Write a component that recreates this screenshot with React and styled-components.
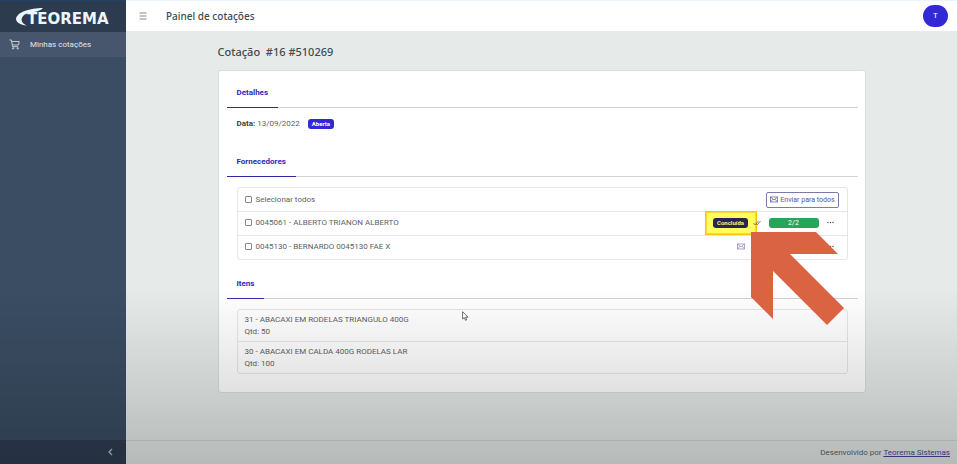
import styled, { createGlobalStyle } from "styled-components";
import { useState } from "react";

const GlobalStyle = createGlobalStyle`
    * {
        box-sizing: border-box;
    }
    body {
        margin: 0;
        font-family: Roboto, "Noto Sans", sans-serif;
        font-size: 8px;
        line-height: 12px;
        color: #5d6267;
        background: #e6ebea;
    }
    button, input {
        font: inherit;
    }
`

const Layout = styled.div`
    display: flex;
    min-height: 100vh;
    position: relative;
`

const Shade = styled.div`
    position: absolute;
    inset: 0;
    pointer-events: none;
    background: linear-gradient(180deg, rgba(0, 0, 0, 0) 62%, rgba(0, 0, 0, 0.12) 85%, rgba(0, 0, 0, 0.21) 100%);
`

const Sidebar = styled.aside`
    display: flex;
    flex-direction: column;
    flex: 0 0 126px;
    background: #3a4d63;
`

const Brand = styled.a`
    display: flex;
    align-items: center;
    justify-content: center;
    height: 32px;
    background: #2d3b4f;
    border-top: 1px solid #224168;
    >svg{
        display: block;
    }
`

const NavLink = styled.a`
    display: flex;
    align-items: center;
    gap: 10px;
    height: 25px;
    padding: 0 9px;
    background: #47566c;
    color: #e3e8ee;
    text-decoration: none;
`

const CollapseButton = styled.button`
    display: flex;
    align-items: center;
    justify-content: flex-end;
    height: 24px;
    margin-top: auto;
    padding: 0 12px;
    border: 0;
    background: #2e3d51;
    color: #b4bfca;
    cursor: pointer;
`

const Page = styled.div`
    display: flex;
    flex-direction: column;
    flex: 1;
    min-width: 0;
`

const Header = styled.header`
    display: flex;
    align-items: center;
    height: 31px;
    padding: 0 9px 0 13px;
    background: #ffffff;
    border-top: 1px solid #e8f6ff;
`

const MenuButton = styled.button`
    display: flex;
    padding: 0;
    border: 0;
    background: none;
    color: #666b70;
    cursor: pointer;
`

const HeaderTitle = styled.h1`
    margin: 0 auto 0 19px;
    font-family: "Noto Sans", sans-serif;
    font-size: 10px;
    font-weight: 500;
    color: #444a50;
`

const Avatar = styled.button`
    width: 25px;
    height: 22px;
    padding: 0;
    border: 0;
    border-radius: 11px;
    background: #3328d6;
    color: #ffffff;
`

const Content = styled.main`
    flex: 1;
    width: 100%;
    max-width: 648px;
    margin: 0 auto;
`

const QuoteTitle = styled.h2`
    margin: 13px 0 10px;
    font-family: "Noto Sans", sans-serif;
    font-size: 11px;
    line-height: 16px;
    font-weight: 500;
    color: #444a4f;
    white-space: pre-wrap;
`

const Card = styled.div`
    padding: 8px 7px 18px 8px;
    background: #ffffff;
    border: 1px solid #d9dddd;
    border-radius: 3px;
`

const Section = styled.section`
    margin-bottom: ${props => props.$gap || "0px"};
`

const TabBar = styled.div`
    display: flex;
    border-bottom: 1px solid #cfd3d5;
    margin-bottom: 10px;
`

const Tab = styled.h3`
    margin: 0 0 -1px;
    padding: 8px 10px;
    border-bottom: 1px solid #3427a8;
    font-size: 8px;
    font-weight: 700;
    color: #3128b4;
`

const DetailLine = styled.p`
    display: flex;
    align-items: center;
    gap: 8px;
    margin: 0;
    padding: 0 10px;
    >span>b{
        color: #3b4148;
    }
`

const Badge = styled.span`
    padding: 0 4px;
    border-radius: 3px;
    background: ${props => props.$color};
    color: ${props => props.$text || "#ffffff"};
    font-size: 6px;
    line-height: 10px;
    font-weight: 700;
`

const List = styled.ul`
    list-style: none;
    margin: 0 10px;
    padding: 0;
    border: 1px solid #e4e6e8;
    border-radius: 3px;
`

const SupplierRow = styled.li`
    display: flex;
    align-items: center;
    justify-content: space-between;
    height: 24px;
    padding: 0 8px 2px 7px;
    &:first-child{
        height: 23px;
        padding-bottom: 0;
    }
    & + &{
        border-top: 1px solid #e4e6e8;
    }
`

const ItemRow = styled.li`
    padding: 4px 7px 3px;
    & + &{
        border-top: 1px solid #e4e6e8;
    }
    >p{
        margin: 0;
    }
`

const CheckLabel = styled.label`
    display: flex;
    align-items: center;
    gap: 4px;
`

const Checkbox = styled.input`
    appearance: none;
    width: 7px;
    height: 7px;
    margin: 0;
    border: 1px solid #85898e;
    border-radius: 1px;
    background: #ffffff;
    &:checked{
        background: #3328d6;
    }
`

const SendAllButton = styled.button`
    display: flex;
    align-items: center;
    gap: 2px;
    height: 16px;
    padding: 0 3px;
    border: 1px solid #7c7aa6;
    border-radius: 2px;
    background: #ffffff;
    color: #5753a5;
    font-size: 7px;
    cursor: pointer;
`

const RowActions = styled.div`
    display: flex;
    align-items: center;
    gap: 8px;
`

const Highlight = styled.span`
    position: relative;
    display: flex;
    align-items: center;
    justify-content: center;
    width: 52px;
    height: 24px;
    margin-right: -12px;
    border: 1px solid #fcc40d;
    box-shadow: inset 0 0 0 1px #fdd835;
    background: #ffff5c;
`

const Arrow = styled.svg`
    position: absolute;
    left: 45px;
    top: 20px;
    z-index: 2;
    pointer-events: none;
`

const Progress = styled.div`
    width: 50px;
    border-radius: 3px;
    background: #27a65a;
    color: #ffffff;
    font-size: 7px;
    line-height: 10px;
    text-align: center;
`

const IconButton = styled.button`
    display: flex;
    width: ${props => props.$width || "8px"};
    padding: 0;
    border: 0;
    background: none;
    color: ${props => props.$color || "#3b4148"};
    cursor: pointer;
`

const Pointer = styled.svg`
    position: absolute;
    left: 462px;
    top: 311px;
    pointer-events: none;
`

const Footer = styled.footer`
    height: 24px;
    padding: 6px 7px;
    border-top: 1px solid #d5dada;
    text-align: right;
    >a{
        color: #4a449c;
    }
`

const Logo = () => (
    <svg width="94" height="20" viewBox="0 0 94 20" role="img" aria-label="Teorema">
        <path d="M27 1C14 1 1 5 0 12C0 15 4 18 11 18.5C6 16.5 4 13 7 9C9 6.5 13 5.5 18 5C22 4.500 25 3 27 1Z" fill="#eef6fb" />
        <text x="11" y="17" fontFamily="DejaVu Sans" fontWeight="700" fontSize="15" fill="#eef6fb">TEOREMA</text>
    </svg>
)

const CartIcon = () => (
    <svg width="11" height="11" viewBox="0 0 11 11" fill="none" stroke="currentColor" strokeWidth="0.8" strokeLinejoin="round">
        <path d="M0.5 1H2.3L3.6 7.7H9.3M2.6 2.5H10.2L9.5 6H3.3" />
        <circle cx="4.1" cy="9.4" r="0.7" />
        <circle cx="8.7" cy="9.4" r="0.7" />
    </svg>
)

const MailIcon = () => (
    <svg width="8" height="7" viewBox="0 0 8 7" fill="none" stroke="currentColor" strokeWidth="0.7">
        <rect x="0.5" y="1" width="7" height="5" />
        <path d="M0.5 1L4 4L7.5 1M0.5 6L3 3.2M7.5 6L5 3.2" />
    </svg>
)

const DotsIcon = () => (
    <svg width="7" height="3" viewBox="0 0 7 3" fill="currentColor">
        <circle cx="1" cy="1.5" r="0.7" />
        <circle cx="3.5" cy="1.5" r="0.7" />
        <circle cx="6" cy="1.5" r="0.7" />
    </svg>
)

const CheckMark = styled.svg`
    position: relative;
    z-index: 1;
`

const CheckAllIcon = () => (
    <CheckMark width="8" height="6" viewBox="0 0 8 6" fill="none" stroke="#5c6166" strokeWidth="0.8">
        <path d="M0.5 3L2.3 5L5.5 0.8M3.6 4.3L4.3 5L7.6 0.8" />
    </CheckMark>
)

const suppliers = [
    { code: "0045061", name: "ALBERTO TRIANON ALBERTO", status: "Concluída", progress: "2/2" },
    { code: "0045130", name: "BERNARDO 0045130 FAE X" },
]

const items = [
    { code: 31, name: "ABACAXI EM RODELAS TRIANGULO 400G", amount: 50 },
    { code: 30, name: "ABACAXI EM CALDA 400G RODELAS LAR", amount: 100 },
]

const MailSlot = styled.div`
    display: flex;
    align-items: center;
    width: 102px;
    justify-content: space-between;
`

const Supplier = ({ supplier, checked, onToggle }) => (
    <SupplierRow>
        <CheckLabel>
            <Checkbox type="checkbox" checked={checked} onChange={onToggle} />
            {supplier.code} - {supplier.name}
        </CheckLabel>
        {supplier.status ?
        <RowActions>
            <Highlight>
                <Badge $color="#2b2352" $text="#f6f27a">{supplier.status}</Badge>
                <Arrow width="93" height="93" viewBox="0 0 93 93">
                    <path d="M0 0H65L87 22H39L93 76L76 93L22 39V87L0 65Z" fill="#da6343" />
                </Arrow>
            </Highlight>
            <CheckAllIcon />
            <Progress>{supplier.progress}</Progress>
            <IconButton $width="12px" aria-label="Opções"><DotsIcon /></IconButton>
        </RowActions> :
        <MailSlot>
            <IconButton $color="#8581b4" aria-label="Enviar"><MailIcon /></IconButton>
            <IconButton $width="12px" aria-label="Opções"><DotsIcon /></IconButton>
        </MailSlot>
        }
    </SupplierRow>
)

const App = () => {

    const [selected, setSelected] = useState([]);

    const toggle = (code) => {
        setSelected(selected.includes(code) ? selected.filter(c => c !== code) : [...selected, code]);
    }

    const allSelected = selected.length === suppliers.length;

    return(
        <Layout>
            <GlobalStyle />
            <Sidebar>
                <Brand href="#"><Logo /></Brand>
                <NavLink href="#"><CartIcon />Minhas cotações</NavLink>
                <CollapseButton aria-label="Recolher menu">
                    <svg width="7" height="8" viewBox="0 0 7 8" fill="none" stroke="currentColor" strokeWidth="1.3">
                        <path d="M5 1L2 4L5 7" />
                    </svg>
                </CollapseButton>
            </Sidebar>
            <Page>
                <Header>
                    <MenuButton aria-label="Menu">
                        <svg width="8" height="8" viewBox="0 0 8 8" stroke="currentColor" strokeWidth="0.8">
                            <path d="M0.5 1H7.5M0.5 4H7.5M0.5 7H7.5" />
                        </svg>
                    </MenuButton>
                    <HeaderTitle>Painel de cotações</HeaderTitle>
                    <Avatar>T</Avatar>
                </Header>
                <Content>
                    <QuoteTitle>Cotação  #16 #510269</QuoteTitle>
                    <Card>
                        <Section $gap="18px">
                            <TabBar><Tab>Detalhes</Tab></TabBar>
                            <DetailLine>
                                <span><b>Data:</b> 13/09/2022</span>
                                <Badge $color="#3328d6">Aberta</Badge>
                            </DetailLine>
                        </Section>
                        <Section $gap="10px">
                            <TabBar><Tab>Fornecedores</Tab></TabBar>
                            <List>
                                <SupplierRow>
                                    <CheckLabel>
                                        <Checkbox
                                            type="checkbox"
                                            checked={allSelected}
                                            onChange={() => setSelected(allSelected ? [] : suppliers.map(s => s.code))}
                                        />
                                        Selecionar todos
                                    </CheckLabel>
                                    <SendAllButton><MailIcon />Enviar para todos</SendAllButton>
                                </SupplierRow>
                                {suppliers.map(s =>
                                    <Supplier
                                        key={s.code}
                                        supplier={s}
                                        checked={selected.includes(s.code)}
                                        onToggle={() => toggle(s.code)}
                                    />
                                )}
                            </List>
                        </Section>
                        <Section>
                            <TabBar><Tab>Itens</Tab></TabBar>
                            <List>
                                {items.map(item =>
                                    <ItemRow key={item.code}>
                                        <p>{item.code} - {item.name}</p>
                                        <p>Qtd: {item.amount}</p>
                                    </ItemRow>
                                )}
                            </List>
                        </Section>
                    </Card>
                </Content>
                <Footer>Desenvolvido por <a href="#">Teorema Sistemas</a></Footer>
            </Page>
            <Shade />
            <Pointer width="7" height="10" viewBox="0 0 7 10" fill="#ffffff" stroke="#4a4a4a" strokeWidth="0.8">
                <path d="M0.6 0.7V8L2.3 6.5L3.5 9.3L4.7 8.8L3.6 6.1H6Z" />
            </Pointer>
        </Layout>
    )
}

export default App;
